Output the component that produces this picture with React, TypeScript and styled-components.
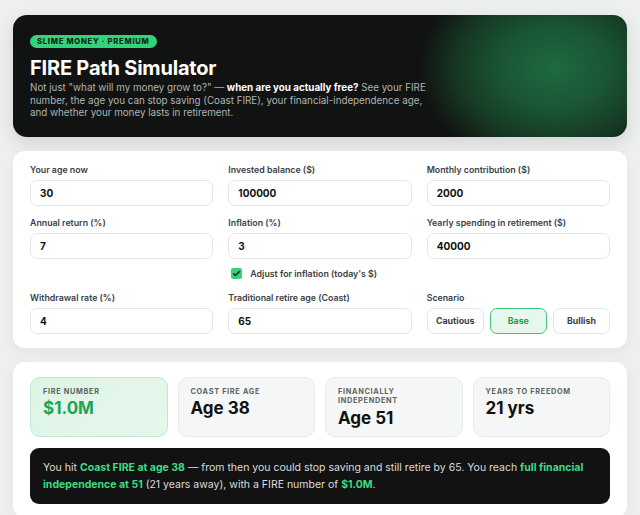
import styled, { createGlobalStyle } from 'styled-components';

const GlobalStyle = createGlobalStyle`
  * { box-sizing: border-box; }
  body {
    margin: 0;
    background: #eef0ef;
    font-family: Inter, "Noto Sans", sans-serif;
    color: #111;
  }
`;

const Page = styled.div`
  padding: 15px 13px;
  display: flex;
  flex-direction: column;
  gap: 14px;
`;

const Hero = styled.header`
  display: flex;
  flex-direction: column;
  align-items: flex-start;
  border-radius: 14px;
  padding: 20px 17px 17px;
  background:
    radial-gradient(ellipse 135px 105px at 542px 53px, #1e6a3f 0%, #1a5535 40%, #163822 72%, rgba(17, 19, 18, 0) 100%),
    #111312;
  box-shadow: 0 6px 18px rgba(0, 0, 0, 0.12);
  color: #fff;
`;

const Badge = styled.span`
  display: block;
  background: #34d37a;
  color: #0b2614;
  font-size: 7.6px;
  font-weight: 800;
  letter-spacing: 0.75px;
  text-transform: uppercase;
  padding: 2px 7px;
  border-radius: 10px;
  line-height: 9px;
`;

const Title = styled.h1`
  margin: 8px 0 2px;
  font-size: 20px;
  font-weight: 700;
  line-height: 24px;
  letter-spacing: -0.2px;
`;

const Lead = styled.p`
  margin: 0;
  max-width: 405px;
  font-size: 9.8px;
  line-height: 12.5px;
  color: #b0b5b2;

  strong {
    color: #fff;
    font-weight: 700;
  }
`;

const Card = styled.section`
  background: #fff;
  border-radius: 12px;
  padding: 14px 17px;
  box-shadow: 0 4px 14px rgba(0, 0, 0, 0.05);
`;

const FormGrid = styled.div`
  display: grid;
  grid-template-columns: repeat(3, minmax(0, 1fr));
  column-gap: 15px;
  row-gap: 12.5px;
  align-items: start;
`;

const Field = styled.div`
  display: flex;
  flex-direction: column;
  gap: 5px;
`;

const Label = styled.label`
  font-size: 8.8px;
  font-weight: 600;
  color: #3b4045;
  line-height: 10px;
`;

const Input = styled.input`
  width: 100%;
  min-width: 0;
  height: 26px;
  border: 1px solid #e2e6e4;
  border-radius: 7px;
  padding: 0 9px;
  font-family: inherit;
  font-size: 10px;
  font-weight: 700;
  color: #111;
  background: #fff;
  outline: none;
`;

const CheckRow = styled.label`
  display: flex;
  align-items: center;
  gap: 8px;
  height: 14px;
  margin-top: 2px;
  padding-left: 3px;
  font-size: 8.8px;
  font-weight: 600;
  color: #3b4045;
`;

const CheckBox = styled.span`
  width: 11px;
  height: 11px;
  border-radius: 2px;
  background: #34d37a;
  display: flex;
  align-items: center;
  justify-content: center;
`;

const Segments = styled.div`
  display: flex;
  gap: 6px;
`;

const Segment = styled.button<{ $active?: boolean }>`
  flex: 1;
  min-width: 0;
  height: 26px;
  border-radius: 7px;
  font-family: inherit;
  font-size: 8.8px;
  font-weight: 700;
  cursor: pointer;
  border: ${p => (p.$active ? '1.5px solid #3cc877' : '1px solid #e2e6e4')};
  background: ${p => (p.$active ? '#e8f7ee' : '#fff')};
  color: ${p => (p.$active ? '#1f9d55' : '#3b4045')};
`;

const Results = styled(Card)`
  padding-top: 15px;
  display: flex;
  flex-direction: column;
  gap: 11px;
`;

const Stats = styled.div`
  display: grid;
  grid-template-columns: repeat(4, minmax(0, 1fr));
  gap: 10px;
`;

const Stat = styled.div<{ $highlight?: boolean }>`
  min-height: 60px;
  border-radius: 10px;
  padding: 9px 12px 8px;
  border: 1px solid ${p => (p.$highlight ? '#bfe9cf' : '#e6eae8')};
  background: ${p => (p.$highlight ? 'linear-gradient(135deg, #ddf4e6, #e6f7ec)' : '#f5f7f6')};
`;

const StatLabel = styled.div`
  font-size: 7.3px;
  font-weight: 700;
  letter-spacing: 0.7px;
  text-transform: uppercase;
  color: #5c6461;
  line-height: 9.7px;
`;

const StatValue = styled.div<{ $green?: boolean }>`
  margin-top: 2px;
  font-size: 17px;
  font-weight: 700;
  line-height: 20px;
  color: ${p => (p.$green ? '#1fa356' : '#111')};
`;

const Summary = styled.p`
  margin: 0;
  background: #121212;
  border-radius: 9px;
  padding: 11px 13px;
  font-size: 10.5px;
  line-height: 17px;
  color: #dcdcdc;

  strong {
    color: #3ddc84;
    font-weight: 700;
  }
`;

const fields = [
  { label: 'Your age now', value: '30' },
  { label: 'Invested balance ($)', value: '100000' },
  { label: 'Monthly contribution ($)', value: '2000' },
];

const stats = [
  { label: 'FIRE number', value: '$1.0M', highlight: true },
  { label: 'Coast FIRE age', value: 'Age 38' },
  { label: 'Financially independent', value: 'Age 51' },
  { label: 'Years to freedom', value: '21 yrs' },
];

export default function App() {
  return (
    <>
      <GlobalStyle />
      <Page>
        <Hero>
          <Badge>Slime Money · Premium</Badge>
          <Title>FIRE Path Simulator</Title>
          <Lead>
            Not just "what will my money grow to?" — <strong>when are you actually free?</strong> See your FIRE
            number, the age you can stop saving (Coast FIRE), your financial-independence age, and whether your
            money lasts in retirement.
          </Lead>
        </Hero>

        <Card>
          <FormGrid>
            {fields.map(f => (
              <Field key={f.label}>
                <Label>{f.label}</Label>
                <Input defaultValue={f.value} />
              </Field>
            ))}

            <Field>
              <Label>Annual return (%)</Label>
              <Input defaultValue="7" />
            </Field>
            <Field>
              <Label>Inflation (%)</Label>
              <Input defaultValue="3" />
              <CheckRow>
                <CheckBox>
                  <svg width="9" height="9" viewBox="0 0 24 24" fill="none" stroke="#0d2a17" strokeWidth="4" strokeLinecap="round" strokeLinejoin="round">
                    <path d="M4 12.5l5 5L20 6.5" />
                  </svg>
                </CheckBox>
                Adjust for inflation (today's $)
              </CheckRow>
            </Field>
            <Field>
              <Label>Yearly spending in retirement ($)</Label>
              <Input defaultValue="40000" />
            </Field>

            <Field>
              <Label>Withdrawal rate (%)</Label>
              <Input defaultValue="4" />
            </Field>
            <Field>
              <Label>Traditional retire age (Coast)</Label>
              <Input defaultValue="65" />
            </Field>
            <Field>
              <Label>Scenario</Label>
              <Segments>
                <Segment>Cautious</Segment>
                <Segment $active>Base</Segment>
                <Segment>Bullish</Segment>
              </Segments>
            </Field>
          </FormGrid>
        </Card>

        <Results>
          <Stats>
            {stats.map(s => (
              <Stat key={s.label} $highlight={s.highlight}>
                <StatLabel>{s.label}</StatLabel>
                <StatValue $green={s.highlight}>{s.value}</StatValue>
              </Stat>
            ))}
          </Stats>
          <Summary>
            You hit <strong>Coast FIRE at age 38</strong> — from then you could stop saving and still retire by 65.
            You reach <strong>full financial independence at 51</strong> (21 years away), with a FIRE number of{' '}
            <strong>$1.0M</strong>.
          </Summary>
        </Results>
      </Page>
    </>
  );
}
